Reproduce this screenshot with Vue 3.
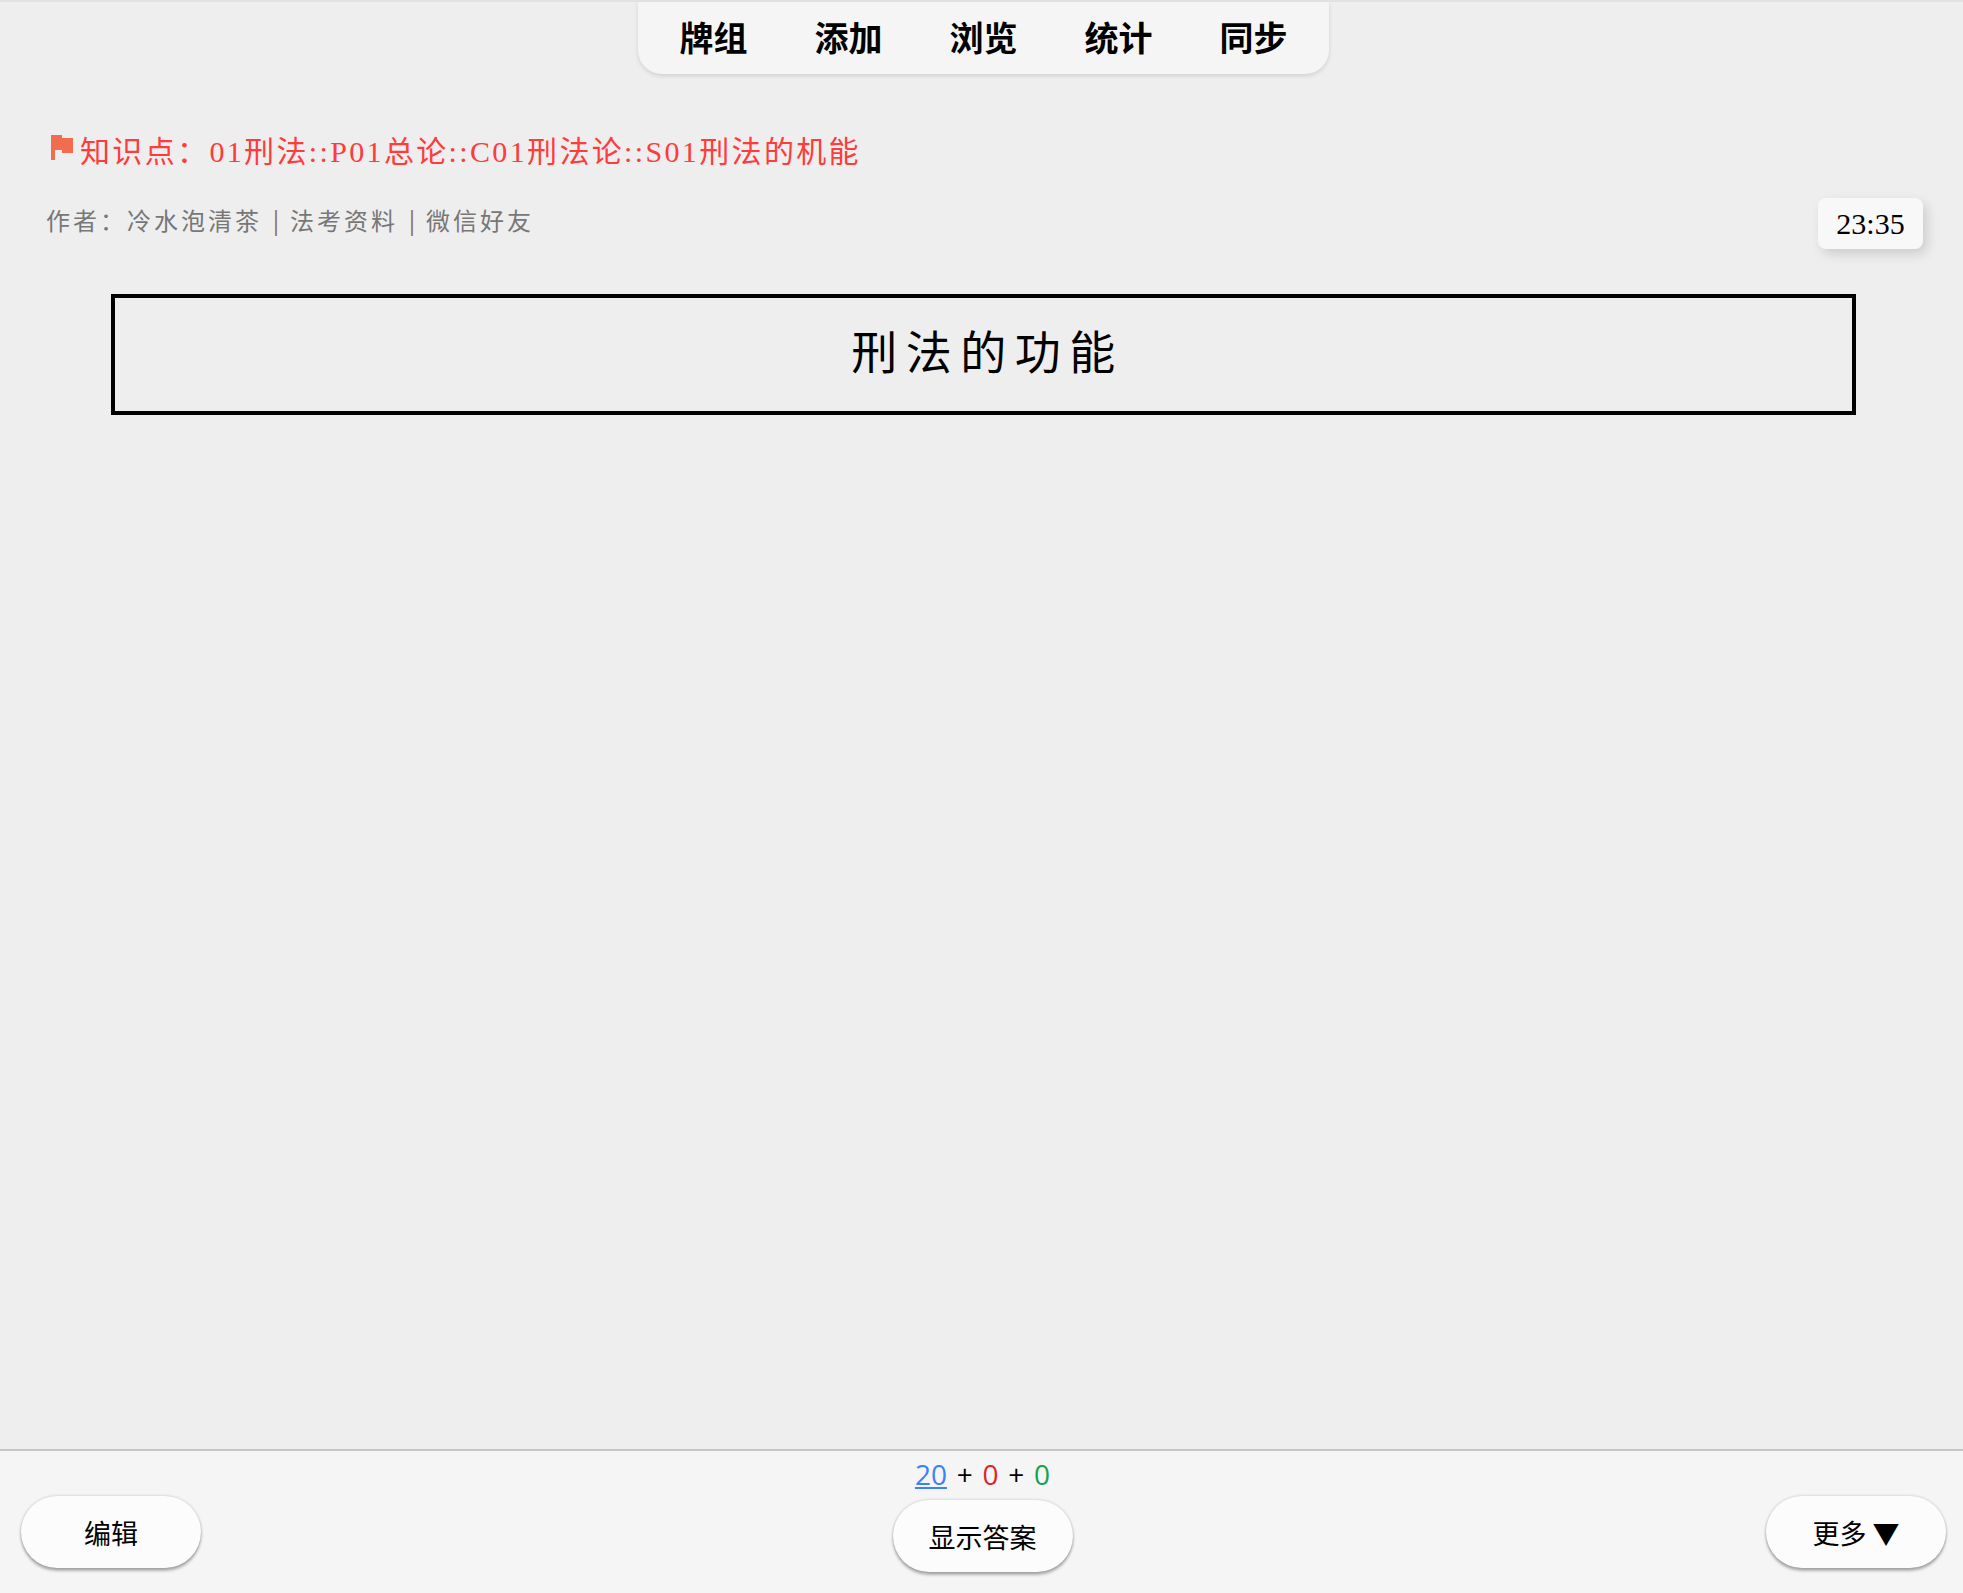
<script setup>
const navItems = ['牌组', '添加', '浏览', '统计', '同步']
</script>

<template>
  <div class="page">
    <nav class="nav">
      <span v-for="item in navItems" :key="item" class="nav-item">{{ item }}</span>
    </nav>

    <main class="card">
      <div class="kicker">
        <svg class="flag" viewBox="0 0 22 25" width="22" height="25" aria-hidden="true">
          <path d="M0 0H11V3H22V18H11V15H4V25H0Z" fill="#f26d50" />
        </svg>
        <span>知识点：01刑法::P01总论::C01刑法论::S01刑法的机能</span>
      </div>

      <div class="meta">
        <div class="author">
          <span>作者：冷水泡清茶</span>
          <i class="sep">|</i>
          <span>法考资料</span>
          <i class="sep">|</i>
          <span>微信好友</span>
        </div>
        <div class="clock">23:35</div>
      </div>

      <h1 class="title">刑法的功能</h1>
    </main>

    <footer class="bar">
      <div class="side">
        <button class="btn" type="button">编辑</button>
      </div>
      <div class="center">
        <div class="counts">
          <u class="new">20</u> + <span class="learn">0</span> + <span class="review">0</span>
        </div>
        <button class="btn" type="button">显示答案</button>
      </div>
      <div class="side right">
        <button class="btn" type="button">更多 ▼</button>
      </div>
    </footer>
  </div>
</template>

<style>
html, body { margin: 0; padding: 0; background: #eeeeee; }
</style>

<style scoped>
.page {
  min-height: 1593px;
  display: flex;
  flex-direction: column;
  background: #eeeeee;
  border-top: 2px solid #e2e2e2;
  box-sizing: border-box;
  font-family: "Liberation Serif", "Noto Sans CJK SC", serif;
}
.nav {
  align-self: center;
  margin-left: 3px;
  display: flex;
  padding: 0 8px;
  height: 72px;
  align-items: center;
  background: #f5f5f5;
  border-radius: 0 0 24px 24px;
  box-shadow: 0 2px 4px rgba(0, 0, 0, 0.12);
}
.nav-item {
  width: 135px;
  text-align: center;
  font: 700 34px/68px "Noto Sans CJK SC", sans-serif;
  padding-left: 1px;
  padding-bottom: 2px;
  box-sizing: border-box;
  color: #000;
}
.card {
  flex: 1;
  padding: 54px 40px 0 46px;
}
.kicker {
  display: flex;
  align-items: flex-start;
  gap: 7px;
  margin-left: 5px;
  font-size: 30px;
  line-height: 48px;
  letter-spacing: 2.35px;
  color: #ff3b3b;
}
.flag { margin-top: 7px; flex: none; }
.meta {
  margin-top: 22px;
  display: flex;
  justify-content: space-between;
  align-items: center;
  height: 51px;
}
.author {
  padding-bottom: 8px;
  font-size: 24px;
  letter-spacing: 3px;
  color: #777;
  display: flex;
  align-items: center;
  gap: 11px;
}
.sep { font-style: normal; font-size: 30px; color: #8a6a45; letter-spacing: 0; }
.clock {
  width: 105px;
  height: 51px;
  line-height: 51px;
  text-align: center;
  font-size: 30px;
  color: #000;
  background: #f8f8f8;
  border-radius: 8px;
  box-shadow: 4px 5px 12px rgba(0, 0, 0, 0.14);
}
.title {
  margin: 45px 67px 0 65px;
  height: 121px;
  box-sizing: border-box;
  border: 4px solid #000;
  padding-left: 8px;
  text-align: center;
  font-size: 46px;
  font-weight: 400;
  line-height: 112px;
  letter-spacing: 8.5px;
  color: #000;
}
.bar {
  height: 144px;
  box-sizing: border-box;
  display: grid;
  grid-template-columns: 1fr auto 1fr;
  background: #f5f5f5;
  border-top: 2px solid #c6c6c6;
  font-family: "Noto Sans CJK SC", "Noto Sans", sans-serif;
}
.side { display: flex; padding: 45px 21px 0 21px; align-items: flex-start; }
.right { justify-content: flex-end; padding-right: 17px; }
.center { display: flex; flex-direction: column; align-items: center; padding-left: 2px; }
.counts {
  font: 28px/47px "Open Sans", "Noto Sans", sans-serif;
  height: 49px;
  color: #000;
  word-spacing: 2.5px;
}
.new { color: #3b82f6; }
.learn { color: #dc2626; }
.review { color: #16a34a; }
.btn {
  width: 180px;
  height: 72px;
  padding: 0;
  border: none;
  border-radius: 36px;
  background: #fcfcfc;
  box-shadow: 0 3px 3px rgba(0, 0, 0, 0.28), 0 0 3px rgba(0, 0, 0, 0.22);
  font: 27px "Noto Sans CJK SC", sans-serif;
  color: #000;
}
</style>
